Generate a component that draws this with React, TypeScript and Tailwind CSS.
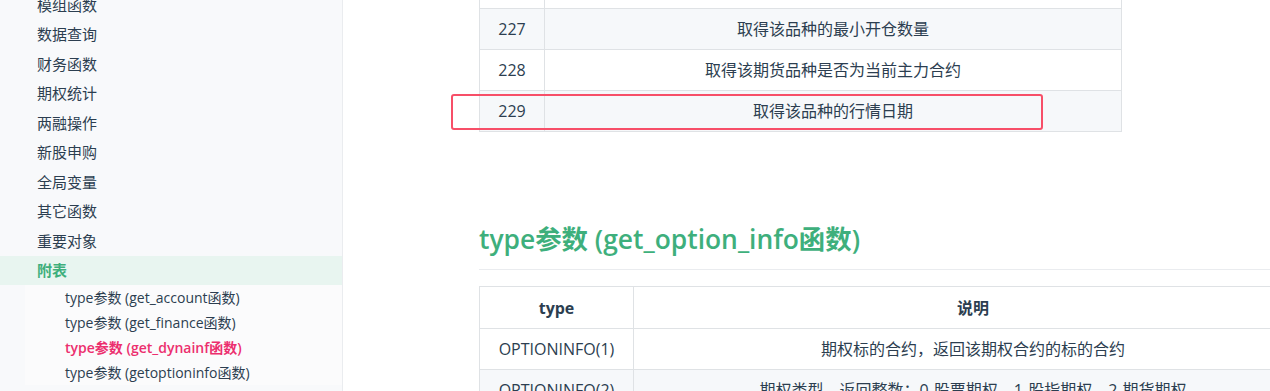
import React from "react";

const FONT = '"Open Sans","Noto Sans CJK SC",sans-serif';

const navItems = [
  "模组函数",
  "数据查询",
  "财务函数",
  "期权统计",
  "两融操作",
  "新股申购",
  "全局变量",
  "其它函数",
  "重要对象",
];

const subItems = [
  { t: "type参数 (get_account函数)", active: false },
  { t: "type参数 (get_finance函数)", active: false },
  { t: "type参数 (get_dynainf函数)", active: true },
  { t: "type参数 (getoptioninfo函数)", active: false },
];

const rows1 = [
  { n: "226", d: "" },
  { n: "227", d: "取得该品种的最小开仓数量" },
  { n: "228", d: "取得该期货品种是否为当前主力合约" },
  { n: "229", d: "取得该品种的行情日期" },
];

const rows2 = [
  { n: "OPTIONINFO(1)", d: "期权标的合约，返回该期权合约的标的合约" },
  { n: "OPTIONINFO(2)", d: "期权类型，返回整数：0-股票期权，1-股指期权，2-期货期权" },
];

export default function App() {
  return (
    <div
      className="flex w-[1270px] h-[391px] overflow-hidden bg-white text-[#2c3e50]"
      style={{ fontFamily: FONT }}
    >
      {/* Sidebar */}
      <aside className="w-[343px] shrink-0 h-full bg-[#f8f9fb] border-r border-[#eaecef] overflow-hidden">
        <ul className="-mt-[9.75px]">
          {navItems.map((t) => (
            <li key={t} className="h-[29.5px] flex items-center pl-[37px] text-[15px]">
              {t}
            </li>
          ))}
          <li className="h-[29.5px] flex items-center pl-[37px] text-[15px] font-bold text-[#3eaf7c] bg-[#e8f5f0]">
            附表
          </li>
          <li className="ml-[25px] bg-[#fbfbfc]">
            <ul>
              {subItems.map((s) => (
                <li
                  key={s.t}
                  className={
                    "h-[25px] flex items-center pl-[40px] text-[14px] " +
                    (s.active ? "text-[#ec2f6e] font-semibold" : "text-[#2c3e50]")
                  }
                >
                  {s.t}
                </li>
              ))}
            </ul>
          </li>
        </ul>
      </aside>

      {/* Main */}
      <main className="flex-1 pl-[136px] -mt-[33px] min-w-0">
        <div className="w-[834px]">
          {/* Table 1 */}
          <div className="relative w-[643px] border border-b-0 border-[#dfe2e5] text-[16px]">
            {rows1.map((r, i) => (
              <div
                key={r.n}
                className={
                  "grid grid-cols-[65px_1fr] h-[41px] border-b border-[#dfe2e5] " +
                  (i % 2 === 1 ? "bg-[#f6f8fa]" : "bg-white")
                }
              >
                <div className="flex items-center justify-center border-r border-[#dfe2e5]">
                  {i === 0 ? "" : r.n}
                </div>
                <div className="flex items-center justify-center">{r.d}</div>
              </div>
            ))}
            <div className="absolute left-[-29px] top-[126px] w-[592px] h-[36px] border-2 border-[#f74f68] rounded-[3px]" />
          </div>

          {/* Heading */}
          <h2 className="mt-[91px] text-[26.4px] leading-[32px] font-semibold text-[#3eaf7c] pb-[14px] border-b border-[#eaecef] w-[900px]">
            type参数 (get_option_info函数)
          </h2>

          {/* Table 2 */}
          <div className="mt-[16px] w-[834px] border border-b-0 border-[#dfe2e5] text-[16px]">
            <div className="grid grid-cols-[154px_1fr] h-[42px] border-b border-[#dfe2e5] font-bold">
              <div className="flex items-center justify-center border-r border-[#dfe2e5]">type</div>
              <div className="flex items-center justify-center">说明</div>
            </div>
            {rows2.map((r, i) => (
              <div
                key={r.n}
                className={
                  "grid grid-cols-[154px_1fr] h-[41px] border-b border-[#dfe2e5] " +
                  (i % 2 === 1 ? "bg-[#f6f8fa]" : "bg-white")
                }
              >
                <div className="flex items-center justify-center border-r border-[#dfe2e5]">{r.n}</div>
                <div className="flex items-center justify-center">{r.d}</div>
              </div>
            ))}
          </div>
        </div>
      </main>
    </div>
  );
}
